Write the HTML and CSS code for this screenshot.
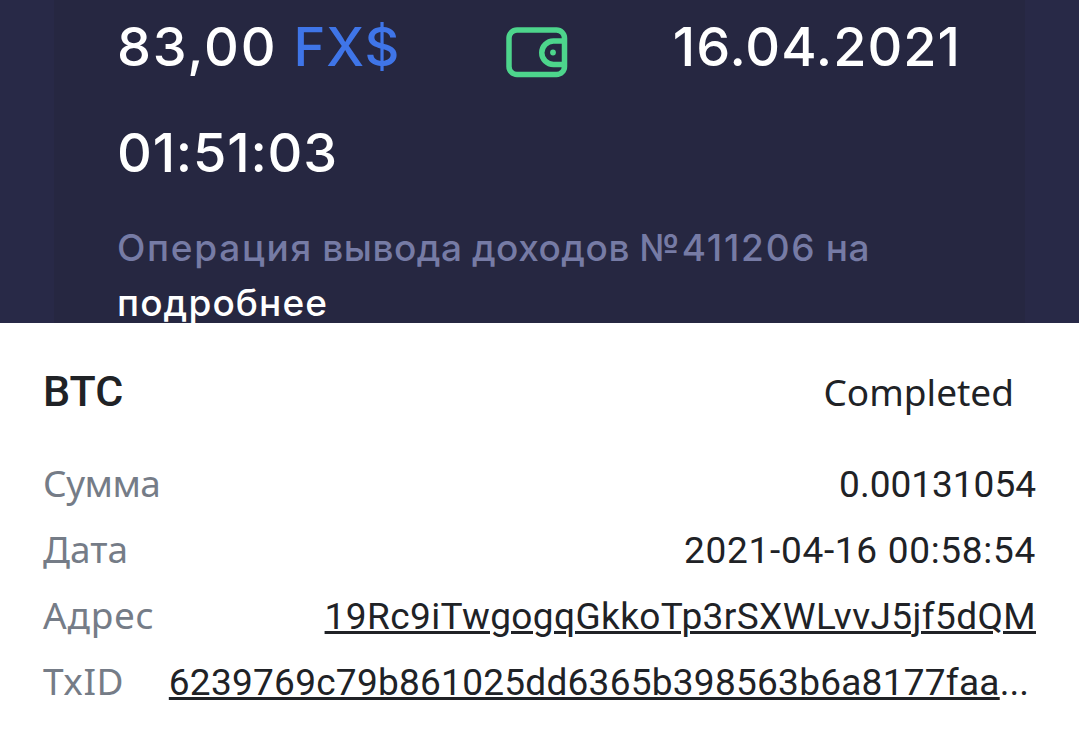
FILE: index.html
```
<!DOCTYPE html>
<html lang="ru">
<head>
<meta charset="utf-8">
<title>BTC</title>
<link rel="stylesheet" href="styles.css">
</head>
<body>
<section class="operation">
  <div class="operation-card">
    <div class="summary">
      <div class="amount">83,00 <span class="currency">FX$</span></div>
      <svg class="wallet" width="62" height="51" viewBox="0 0 62 51" fill="none" stroke="#4dd58c" stroke-width="5.5">
        <rect x="3" y="3" width="55.500" height="44.500" rx="8"/>
        <path d="M58.500 14H47.500a11.750 11.750 0 0 0 0 23.500h11"/>
        <circle cx="47" cy="25.500" r="2.900" fill="#4dd58c" stroke="none"/>
      </svg>
      <div class="date">16.04.2021</div>
    </div>
    <div class="time">01:51:03</div>
    <div class="description"><span class="kind">Операция</span> вывода доходов <span class="number">№411206</span> на</div>
    <a class="more">подробнее</a>
  </div>
</section>
<section class="transfer">
  <header class="transfer-head">
    <h1 class="coin">BTC</h1>
    <span class="status">Completed</span>
  </header>
  <div class="row"><span class="label sum-label">Сумма</span><span class="value sum">0.00131054</span></div>
  <div class="row"><span class="label">Дата</span><span class="value when">2021-04-16 00:58:54</span></div>
  <div class="row"><span class="label address-label">Адрес</span><a class="link address">19Rc9iTwgogqGkkoTp3rSXWLvvJ5jf5dQM</a></div>
  <div class="row"><span class="label id-label">TxID</span><span class="tx"><a class="link hash">6239769c79b861025dd6365b398563b6a8177faa</a>...</span></div>
</section>
</body>
</html>
```
FILE: styles.css
```
* { box-sizing: border-box; }
body { margin: 0; background: #fff; width: 1079px; height: 738px; overflow: hidden; }

.operation {
  height: 323px;
  overflow: hidden;
  padding: 0 54px;
  background: #282947;
  color: #fff;
  font-family: Inter, sans-serif;
  font-weight: 450;
}
.operation-card { height: 323px; padding: 0 64px 0 63px; background: #262741; }
.summary {
  display: flex;
  justify-content: space-between;
  align-items: center;
  height: 94px;
  font-size: 54px;
  line-height: 94px;
  white-space: nowrap;
}
.amount { width: 286px; letter-spacing: 1.8px; }
.currency { color: #3f75e8; letter-spacing: 1px; }
.wallet { flex: none; margin: 10px 0 0 -2px; }
.date { letter-spacing: 1px; }
.time { font-size: 54px; line-height: 118px; letter-spacing: .8px; }
.description, .more {
  display: block;
  font-size: 37px;
  line-height: 55px;
  letter-spacing: 1.1px;
  white-space: nowrap;
}
.description { margin-top: 8px; color: #767ba5; letter-spacing: .5px; word-spacing: -1px; }
.kind { letter-spacing: 1.7px; }
.number { letter-spacing: 1.8px; }

.transfer { padding: 38px 43px 0 43px; font-family: "Noto Sans", sans-serif; color: #202226; }
.transfer-head { display: flex; justify-content: space-between; align-items: baseline; height: 89px; line-height: 60px; padding-right: 22px; }
.coin { margin: 0; font: 500 43px/60px Roboto, sans-serif; }
.status { font-size: 37px; }
.row {
  display: flex;
  justify-content: space-between;
  align-items: baseline;
  height: 66px;
  font-size: 37px;
  line-height: 66px;
  white-space: nowrap;
}
.label { color: #757c87; }
.sum-label { letter-spacing: -.5px; }
.address-label { letter-spacing: .9px; }
.id-label { letter-spacing: .5px; }
.value, .tx, .address { font-family: Roboto, sans-serif; }
.when { letter-spacing: .7px; }
.link { text-decoration: underline; text-decoration-thickness: 3px; text-underline-offset: 2px; }
.address { letter-spacing: .4px; }
.tx { margin-right: 7px; }
.hash { letter-spacing: .26px; }
```
